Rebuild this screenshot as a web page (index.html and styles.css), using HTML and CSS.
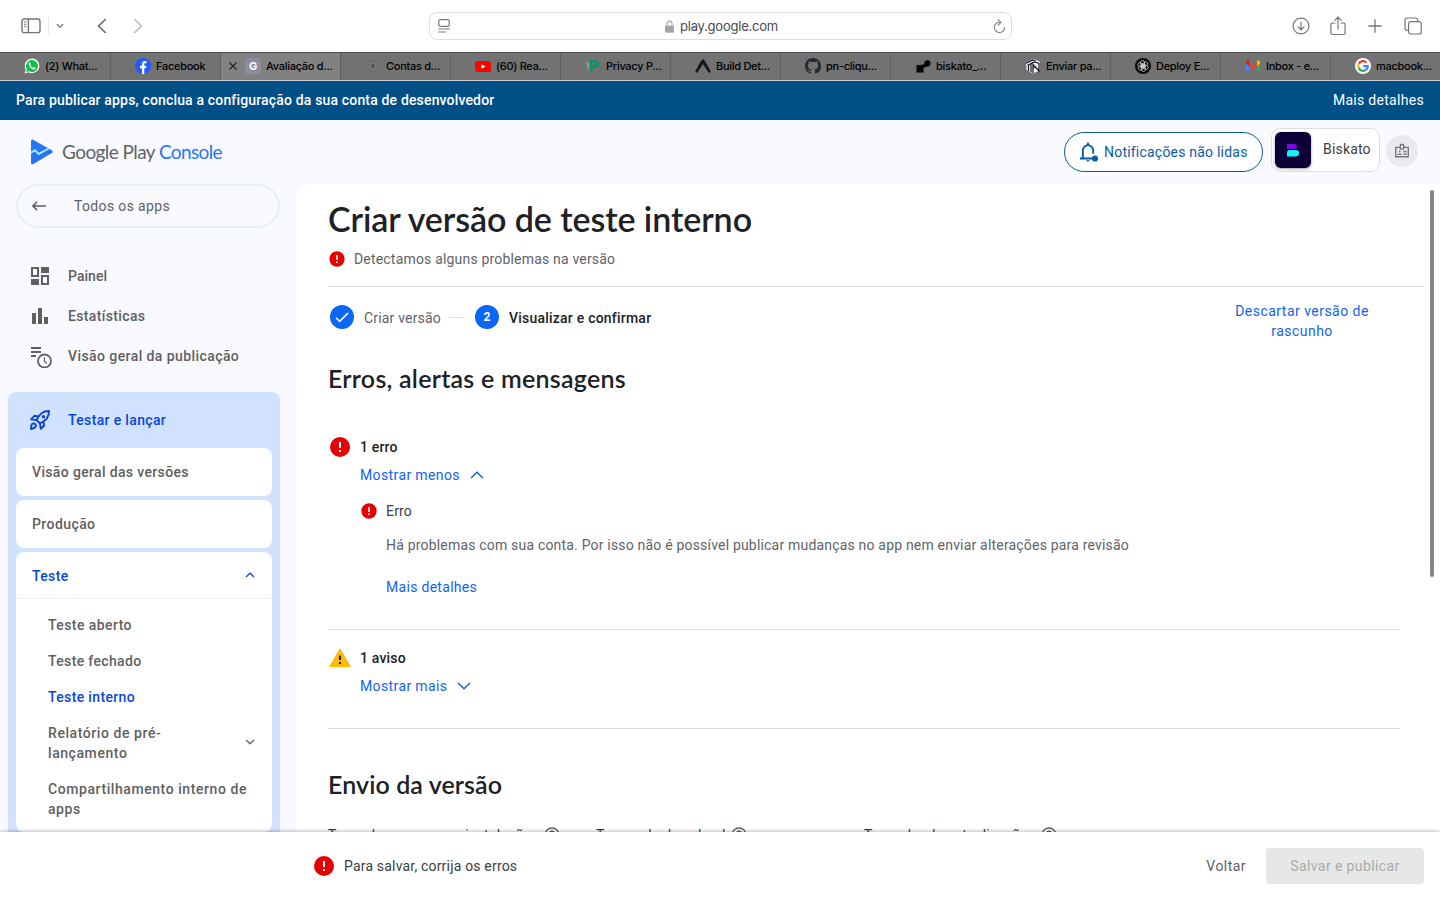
FILE: index.html
```
<!DOCTYPE html>
<html lang="pt-BR">
<head>
<meta charset="utf-8">
<title>Google Play Console</title>
<link rel="stylesheet" href="styles.css">
</head>
<body>
<div class="toolbar">
  <div class="tools-left">
    <svg class="i-side" width="20" height="16" viewBox="0 0 20 16" fill="none" stroke="#737373" stroke-width="1.4"><rect x="1" y="1" width="18" height="13.6" rx="2.2"/><path d="M7.4 1v13.6"/><path d="M3 4h2.4M3 6.3h2.4M3 8.6h2.4" stroke-width="1"/></svg>
    <span class="tool-sep"></span>
    <svg class="i-drop" width="8" height="6" viewBox="0 0 8 6" fill="none" stroke="#808080" stroke-width="1.5"><path d="M.8 1.2 4 4.3 7.2 1.2"/></svg>
    <svg class="i-back" width="10" height="16" viewBox="0 0 10 16" fill="none" stroke="#666" stroke-width="1.6" stroke-linecap="round" stroke-linejoin="round"><path d="M8.3 1.5 1.5 8l6.8 6.5"/></svg>
    <svg class="i-fwd" width="10" height="16" viewBox="0 0 10 16" fill="none" stroke="#bcbcbc" stroke-width="1.6" stroke-linecap="round" stroke-linejoin="round"><path d="M1.7 1.5 8.5 8l-6.8 6.5"/></svg>
  </div>
  <div class="address">
    <svg width="12" height="14" viewBox="0 0 12 14" fill="none" stroke="#7b7b7b" stroke-width="1.2"><rect x=".8" y=".7" width="10.4" height="6.6" rx="1.3"/><path d="M.2 10h11.6M.2 13h8"/></svg>
    <div class="host">
      <svg width="9" height="13" viewBox="0 0 9 13"><rect x="0" y="5.4" width="9" height="7.4" rx="1.2" fill="#a6a6a6"/><path d="M2 6V3.6a2.5 2.5 0 0 1 5 0V6" fill="none" stroke="#a6a6a6" stroke-width="1.1"/></svg>
      <span class="url">play.google.com</span>
    </div>
    <svg width="13" height="15" viewBox="0 0 13 15" fill="none" stroke="#7b7b7b" stroke-width="1.1" stroke-linecap="round"><path d="M6.7 3.3A5.1 5.1 0 1 0 11.5 8.4"/><path d="M5 .8 7.9 3.4 5.2 6.2"/></svg>
  </div>
  <div class="tools-right">
    <svg width="18" height="18" viewBox="0 0 18 18" fill="none" stroke="#757575" stroke-width="1.2" stroke-linecap="round"><circle cx="9" cy="9" r="7.9"/><path d="M9 5v7.6M6 9.8l3 3 3-3"/></svg>
    <svg width="16" height="20" viewBox="0 0 16 20" fill="none" stroke="#757575" stroke-width="1.2" stroke-linecap="round"><path d="M5 7H2.600A1.700 1.700 0 0 0 .9 8.700v8.100a1.700 1.700 0 0 0 1.700 1.700h10.800a1.700 1.700 0 0 0 1.700-1.700V8.700A1.700 1.700 0 0 0 13.400 7H11M8 13V1.300M4.800 4.300 8 1.100l3.200 3.200"/></svg>
    <svg width="14" height="14" viewBox="0 0 14 14" stroke="#757575" stroke-width="1.300" stroke-linecap="round"><path d="M7 .8v12.400M.8 7h12.400"/></svg>
    <svg width="18" height="18" viewBox="0 0 18 18" fill="none" stroke="#757575" stroke-width="1.2"><rect x="4.600" y="4.600" width="12.600" height="12.400" rx="2"/><path d="M4.500 13.400H3A2 2 0 0 1 1 11.400V3a2 2 0 0 1 2-2h8.600a2 2 0 0 1 2 2v1.400"/></svg>
  </div>
</div>

<div class="tabs">
  <div class="tab"><svg width="16" height="16" viewBox="0 0 16 16"><path d="M.6 15.400 1.700 11.500A7.300 7.300 0 1 1 4.600 14.300z" fill="#fff"/><path d="M2 14 2.900 11.200A6 6 0 1 1 5 13.200z" fill="#12c143"/><path d="M5.700 4.300c-.9.200-1.300 1-1.100 2 .5 2.400 2.600 4.600 5 5.100 1 .2 2-.4 2.100-1.500L9.900 9l-.9.900C7.700 9.400 6.800 8.500 6.300 7.200l.7-.8z" fill="#fff"/></svg><span>(2) What...</span></div>
  <div class="tab"><svg width="16" height="16" viewBox="0 0 16 16"><circle cx="8" cy="8" r="8" fill="#1f5cff"/><path d="M7 16V10.200H5V7.800h2V6.300C7 4.100 8.200 3 10 3l1.500.1v2.100h-1c-.9 0-1.200.5-1.200 1.200v1.400h2.100L11 10.200H9.300V16z" fill="#fff"/></svg><span>Facebook</span></div>
  <div class="tab active"><svg class="close" width="8" height="8" viewBox="0 0 8 8" stroke="#222" stroke-width="1.100"><path d="M.5.5l7 7M7.500.5l-7 7"/></svg><b class="fav-g">G</b><span>Avaliação d...</span></div>
  <div class="tab"><svg width="16" height="16" viewBox="0 0 16 16"><circle cx="8" cy="8" r="5" fill="#777" stroke="#676767" stroke-width="1" stroke-dasharray="2.600 1.300"/><circle cx="8" cy="8" r="2" fill="#555"/></svg><span>Contas d...</span></div>
  <div class="tab"><svg width="16" height="16" viewBox="0 0 16 16"><rect y="3" width="16" height="11" rx="2.800" fill="#f00"/><path d="M6.500 6.200v4.600l4-2.300z" fill="#fff"/></svg><span>(60) Rea...</span></div>
  <div class="tab"><svg width="16" height="16" viewBox="0 0 16 16"><path d="M1 3l4 2v9L2 9z" fill="#8b9698"/><path d="M4.500 2H10a4 4 0 0 1 0 8.300H7.300V14H4.500zM7.300 4.600v3.200H9.500a1.600 1.600 0 0 0 0-3.200z" fill="#0d9269" fill-rule="evenodd"/></svg><span>Privacy P...</span></div>
  <div class="tab"><svg width="16" height="16" viewBox="0 0 16 16"><path d="M7 1.800Q8 .9 9 1.800C11.500 5.200 13.500 9.500 15.700 13.400c-.2 1.200-1.500 1.700-2.300.8C11.500 11.600 9.800 8.700 8 6 6.200 8.700 4.500 11.600 2.600 14.200 1.800 15.100.5 14.600.3 13.400 2.500 9.500 4.500 5.200 7 1.800z" fill="#111820"/></svg><span>Build Det...</span></div>
  <div class="tab"><svg width="16" height="16" viewBox="0 0 16 16"><path fill="#24292f" d="M8 0C3.580 0 0 3.580 0 8c0 3.540 2.290 6.530 5.470 7.590.4.070.55-.17.55-.38v-1.490c-2.010.37-2.530-.49-2.690-.94-.09-.23-.48-.94-.82-1.130-.28-.15-.68-.52-.01-.53.63-.01 1.080.58 1.230.82.72 1.210 1.870.87 2.330.66.07-.52.28-.87.51-1.070-1.780-.2-3.640-.89-3.640-3.950 0-.87.31-1.590.82-2.150-.08-.2-.36-1.020.08-2.120 0 0 .67-.21 2.200.82a7.600 7.600 0 0 1 4 0c1.530-1.040 2.200-.82 2.200-.82.44 1.100.16 1.920.08 2.120.51.56.82 1.270.82 2.150 0 3.070-1.870 3.750-3.650 3.950.29.25.54.73.54 1.480v2.200c0 .21.150.46.550.38A8 8 0 0 0 16 8c0-4.420-3.580-8-8-8z"/></svg><span>pn-cliqu...</span></div>
  <div class="tab"><svg width="16" height="16" viewBox="0 0 16 16"><path d="M1.500 7H5.500L9.300 6.300A3.200 3.200 0 1 1 12 8.500L8.500 10v4.500h-7z" fill="#050505"/></svg><span>biskato_...</span></div>
  <div class="tab"><svg width="16" height="16" viewBox="0 0 16 16"><path d="M1 4.500 8.500.8l6.500 3v8.500L8 15.400 1.500 12z" fill="#f3f3f8"/><path d="M1 5.200 8 2l2.500.8M2.500 7.200 9.500 4 14.500 5.500M3.500 6.500V13M6 5.800V14M8 15V6.500l6 6.500V5.500M8.500 10l3-1" stroke="#161527" fill="none" stroke-width="1.200"/></svg><span>Enviar pa...</span></div>
  <div class="tab"><svg width="16" height="16" viewBox="0 0 16 16"><circle cx="8" cy="8" r="8" fill="#050505"/><g fill="none" stroke="#e8e8e8" stroke-width=".7"><rect x="5.700" y="2.500" width="3.800" height="6.600" rx="1.900"/><rect x="5.700" y="2.500" width="3.800" height="6.600" rx="1.900" transform="rotate(60 8 8)"/><rect x="5.700" y="2.500" width="3.800" height="6.600" rx="1.900" transform="rotate(120 8 8)"/><rect x="5.700" y="2.500" width="3.800" height="6.600" rx="1.900" transform="rotate(180 8 8)"/><rect x="5.700" y="2.500" width="3.800" height="6.600" rx="1.900" transform="rotate(240 8 8)"/><rect x="5.700" y="2.500" width="3.800" height="6.600" rx="1.900" transform="rotate(300 8 8)"/></g></svg><span>Deploy E...</span></div>
  <div class="tab"><svg width="16" height="16" viewBox="0 0 16 16"><path d="M1 4v9.200h3.200V6z" fill="#4285f4"/><path d="M15 4v9.200h-3.200V6z" fill="#34a853"/><path d="M11.800 4.800V8L15 5.700V4c0-1.500-1.700-2-2.900-1.200z" fill="#fbbc04"/><path d="M4 4.400 8 7.400l4-3V8l-4 3.200L4 8z" fill="#ea4335"/><path d="M1 4c0-1.500 1.600-2.100 2.900-1.200l.3.200v5L1 5.700z" fill="#d21f1f"/></svg><span>Inbox - e...</span></div>
  <div class="tab"><svg width="16" height="16" viewBox="0 0 16 16"><circle cx="8" cy="8" r="8" fill="#fff"/><g fill="none" stroke-width="2.200"><path d="M11.600 4.700A4.800 4.800 0 0 0 3.700 5.900" stroke="#ea4335"/><path d="M3.800 5.700a4.900 4.900 0 0 0 0 4.600" stroke="#fbbc05"/><path d="M3.700 10.100a4.800 4.800 0 0 0 7.400 1.600" stroke="#34a853"/><path d="M8.200 8.200H12.800A4.800 4.800 0 0 1 11 11.800" stroke="#4285f4"/></g></svg><span>macbook...</span></div>
</div>

<div class="banner"><span class="banner-text">Para publicar apps, conclua a configuração da sua conta de desenvolvedor</span><a class="banner-link">Mais detalhes</a></div>

<header class="header">
  <div class="brand">
    <svg width="24" height="26" viewBox="0 0 24 26"><path d="M1 2.200C1 .9 2.300.2 3.500.9l18.300 10.300c1.200.7 1.200 2.100 0 2.800L3.500 25C2.300 25.700 1 25 1 23.700z" fill="#2775f6"/><path d="M1 12.600 5.300 9.900l3.300 3.800L17.800 8.900l2 1.200L8.300 16.200 5 12.600 1 14.800z" fill="#a5e9fd"/></svg>
    <span class="logo-a">Google Play</span><span class="logo-b">Console</span>
  </div>
  <div class="account">
    <div class="notif"><svg width="20" height="22" viewBox="0 0 20 22"><path d="M1 17.500h12M3.800 17.500V9.500a5.200 5.200 0 0 1 10.400 0v3.300M9 4.500V1.500" fill="none" stroke="#0b5c9e" stroke-width="1.900"/><path d="M6.800 19.200h4.200L9 21z" fill="#0b5c9e"/><circle cx="16" cy="17.500" r="3.100" fill="#0b5c9e"/></svg><span>Notificações não lidas</span></div>
    <div class="app"><span class="app-icon"><svg width="12" height="13" viewBox="0 0 12 13"><path d="M0 0h6.500a3 3 0 0 1 2.700 5H0z" fill="#7a0bdc"/><path d="M0 8.500C0 7 1 6 2.500 6H9a3.200 3.200 0 0 1 0 6.400H0z" fill="#0ff5f5"/></svg></span><span class="app-name">Biskato</span></div>
    <div class="badge"><svg width="16" height="16" viewBox="0 0 16 16" fill="none" stroke="#74777b" stroke-width="1.400"><path d="M6.200 4.400H1.700v9.400h12.600V4.400H9.800"/><rect x="6.300" y="1.500" width="3.400" height="4.600" rx=".8"/><path d="M9.500 8.500h3M9.500 11h3M3.600 11.400h4.200M5.700 7.500v2"/></svg></div>
  </div>
</header>

<div class="body">
  <nav class="side">
    <a class="back"><svg width="14" height="10" viewBox="0 0 14 10" fill="none" stroke="#5f5f5f" stroke-width="1.500"><path d="M14 5H1.200M5 .9.900 5 5 9.100"/></svg><span>Todos os apps</span></a>
    <div class="nav">
      <a><svg width="24" height="24" viewBox="0 0 24 24"><path d="M3 3h8v10H3zM5 5v6h4V5zM13 3h8v6h-8zM3 15h8v6H3zM13 11h8v10h-8zM15 13v6h4v-6z" fill="#5f5f5f" fill-rule="evenodd"/></svg><span class="snug">Painel</span></a>
      <a><svg width="24" height="24" viewBox="0 0 24 24"><path d="M4 9h4v11H4zM10 4h4v16h-4zM16 13h4v7h-4z" fill="#5f5f5f"/></svg><span>Estatísticas</span></a>
      <a><svg width="24" height="24" viewBox="0 0 24 24" fill="none" stroke="#5f6368" stroke-width="1.800"><path d="M3 4h10M3 8h10M3 12h5"/><circle cx="16.500" cy="17" r="6.500"/><path d="M16.400 13.300v4l2.300 2.200" stroke-width="1.200"/></svg><span class="loose">Visão geral da publicação</span></a>
    </div>
    <div class="group">
      <a class="group-head"><svg width="24" height="24" viewBox="0 0 24 24" fill="none" stroke="#0b45d8" stroke-width="1.900" stroke-linejoin="round"><path d="M21 3c-5.500-.3-9.500 2.700-12.500 9l3.500 3.500C18.300 12.500 21.300 8.500 21 3z"/><path d="M10 8.500 6.500 7.800 3.200 11.200l5.300.8M15.500 14l.7 3.500-3.400 3.300-.8-5.300M3 21c0-3 .3-4.200 1.200-5 1-.9 2.300-.8 3 .1.800.8.900 2 .1 2.900-.9.900-1.800 1.500-4.300 2z"/><circle cx="15.500" cy="8.700" r="1.700" fill="#0b45d8" stroke="none"/></svg><span>Testar e lançar</span></a>
      <a class="card"><span>Visão geral das versões</span></a>
      <a class="card"><span class="loose">Produção</span></a>
      <div class="card open">
        <a class="open-head"><span>Teste</span><svg width="10" height="6" viewBox="0 0 10 6" fill="none" stroke="#0b45d8" stroke-width="1.200"><path d="M1 5 5 1.200 9 5"/></svg></a>
        <div class="sub">
          <a><span class="loose">Teste aberto</span></a>
          <a><span>Teste fechado</span></a>
          <a class="on"><span>Teste interno</span></a>
          <a class="exp"><span class="wide">Relatório de pré-<br>lançamento</span><svg width="10" height="6" viewBox="0 0 10 6" fill="none" stroke="#5f5f5f" stroke-width="1.200"><path d="M1 1 5 4.800 9 1"/></svg></a>
          <a><span class="wide">Compartilhamento interno de<br>apps</span></a>
        </div>
      </div>
    </div>
  </nav>

  <main class="main">
    <h1>Criar versão de teste interno</h1>
    <div class="status"><svg width="18" height="18" viewBox="0 0 20 20"><circle cx="10" cy="10" r="8.500" fill="#e60000"/><path d="M9.100 5.500h1.800v5.500H9.100zM9.100 12.700h1.800v1.800H9.100z" fill="#fff"/></svg><span>Detectamos alguns problemas na versão</span></div>
    <div class="rule full"></div>
    <div class="steps">
      <div class="stepper">
        <span class="dot"><svg width="14" height="11" viewBox="0 0 14 11" fill="none" stroke="#fff" stroke-width="1.600"><path d="M1 5.800 4.600 9.300 13 1.200"/></svg></span>
        <span class="step-a">Criar versão</span><i></i>
        <span class="dot">2</span><span class="step-b">Visualizar e confirmar</span>
      </div>
      <a class="discard">Descartar versão de<br>rascunho</a>
    </div>
    <h2 class="h-err">Erros, alertas e mensagens</h2>

    <section class="msg err">
      <svg width="24" height="24" viewBox="0 0 24 24"><circle cx="12" cy="12" r="10" fill="#e60000"/><path d="M11 7h2v6h-2zM11 15h2v2h-2z" fill="#fff"/></svg>
      <div class="msg-body">
        <div class="msg-title">1 erro</div>
        <a class="toggle"><span>Mostrar menos</span><svg width="14" height="8" viewBox="0 0 14 8" fill="none" stroke="#1163f2" stroke-width="1.500"><path d="M1 7 7 1.200 13 7"/></svg></a>
        <div class="detail">
          <svg width="18" height="18" viewBox="0 0 20 20"><circle cx="10" cy="10" r="8.500" fill="#e60000"/><path d="M9.100 5.500h1.800v5.500H9.100zM9.100 12.700h1.800v1.800H9.100z" fill="#fff"/></svg>
          <div>
            <div class="d-title">Erro</div>
            <p>Há problemas com sua conta. Por isso não é possível publicar mudanças no app nem enviar alterações para revisão</p>
            <a class="link">Mais detalhes</a>
          </div>
        </div>
      </div>
    </section>
    <div class="rule"></div>
    <section class="msg warn">
      <svg width="24" height="24" viewBox="0 0 24 24"><path d="M1 21h22L12 2z" fill="#fdbb05"/><path d="M11 9.500h2v4.500h-2zM11 16h2v2h-2z" fill="#202124"/></svg>
      <div class="msg-body">
        <div class="msg-title">1 aviso</div>
        <a class="toggle"><span>Mostrar mais</span><svg width="14" height="8" viewBox="0 0 14 8" fill="none" stroke="#1163f2" stroke-width="1.500"><path d="M1 1 7 6.800 13 1"/></svg></a>
      </div>
    </section>
    <div class="rule"></div>
    <h2 class="h-send">Envio da versão</h2>
    <div class="cols">
      <div><span>Tamanho para novas instalações</span><svg width="16" height="16" viewBox="0 0 16 16" fill="none" stroke="#5f6368" stroke-width="1.300"><circle cx="8" cy="8" r="7"/><path d="M5.600 6.400a2.400 2.400 0 1 1 3.800 2C8.400 9 8 9.300 8 10.200M8 11.400v1.400"/></svg></div>
      <div><span>Tempo de download</span><svg width="16" height="16" viewBox="0 0 16 16" fill="none" stroke="#5f6368" stroke-width="1.300"><circle cx="8" cy="8" r="7"/><path d="M5.600 6.400a2.400 2.400 0 1 1 3.800 2C8.400 9 8 9.300 8 10.200M8 11.400v1.400"/></svg></div>
      <div><span>Tamanho das atualizações</span><svg width="16" height="16" viewBox="0 0 16 16" fill="none" stroke="#5f6368" stroke-width="1.300"><circle cx="8" cy="8" r="7"/><path d="M5.600 6.400a2.400 2.400 0 1 1 3.800 2C8.400 9 8 9.300 8 10.200M8 11.400v1.400"/></svg></div>
    </div>
  </main>
  <div class="thumb"></div>
</div>

<footer class="footer">
  <svg width="24" height="24" viewBox="0 0 24 24"><circle cx="12" cy="12" r="10" fill="#e60000"/><path d="M11 7h2v6h-2zM11 15h2v2h-2z" fill="#fff"/></svg>
  <span class="foot-msg">Para salvar, corrija os erros</span>
  <a class="voltar">Voltar</a>
  <button class="save">Salvar e publicar</button>
</footer>
</body>
</html>
```
FILE: styles.css
```
* { box-sizing: border-box; }
body { margin: 0; width: 1440px; height: 900px; overflow: hidden; display: flex; flex-direction: column; background: #f8faff; font: 400 14px/20px Roboto, "Open Sans", sans-serif; letter-spacing: .185px; color: #5f5f5f; }
h1, h2, p { margin: 0; }
svg { display: block; flex: none; }
span { white-space: nowrap; }

.toolbar { height: 52px; flex: none; display: grid; grid-template-columns: 429px 583px 1fr; align-items: center; background: #fff; }
.tools-left { display: flex; align-items: center; padding-left: 21px; }
.tool-sep { width: 1px; height: 18px; background: #e8e8e8; margin-left: 7px; }
.i-drop { margin-left: 7px; }
.i-back { margin: -1px 0 0 33px; }
.i-fwd { margin: -1px 0 0 26px; }
.address { height: 28px; border: 1px solid #dedede; border-radius: 8px; display: flex; align-items: center; justify-content: space-between; padding: 0 5px 0 8px; }
.host { display: flex; align-items: center; gap: 6px; }
.url { font: 400 13px/16px Inter, sans-serif; letter-spacing: -.22px; color: #4a4a4a; }
.tools-right { display: flex; align-items: center; padding: 0 0 1px 280px; }
.tools-right svg + svg { margin-left: 20px; }
.tools-right svg:nth-child(3) { margin-left: 22px; }
.tools-right svg:nth-child(4) { margin-left: 22px; }

.tabs { height: 29px; flex: none; display: flex; background: #727272; border-top: 1px solid #4f4f4f; border-bottom: 1px solid #c9cfd4; }
.tab { width: 110px; padding: 0 0 1px 24px; display: flex; align-items: center; gap: 5px; font: 500 11px/14px Inter, sans-serif; letter-spacing: -.28px; color: #000; }
.tab + .tab { border-left: 1px solid #5f5f5f; }
.tab.active { width: 120px; background: #818181; padding-left: 8px; }
.tab .close { margin-right: 3px; }
.fav-g { width: 16px; height: 16px; border-radius: 3px; background: #8d8d9e; color: #fff; text-align: center; font: 700 11px/17px Inter, sans-serif; }

.banner { height: 39px; flex: none; background: #004f87; color: #fff; display: flex; align-items: center; justify-content: space-between; padding: 0 16px 1px; font-weight: 500; letter-spacing: .163px; }
.banner-link { font-weight: 450; letter-spacing: .3px; }

.header { height: 64px; flex: none; display: flex; align-items: center; justify-content: space-between; padding: 0 22px 0 30px; }
.brand { display: flex; align-items: center; font: 400 19px/24px Lato, sans-serif; }
.logo-a { margin-left: 8px; color: #5f6368; letter-spacing: -.58px; }
.logo-b { margin-left: 4px; color: #2775f6; letter-spacing: -.63px; }
.account { display: flex; align-items: center; }
.notif { width: 199px; height: 40px; border: 1px solid #0b5c9e; border-radius: 20px; background: #fff; color: #0b5c9e; letter-spacing: .21px; display: flex; align-items: center; gap: 5px; padding-left: 14px; }
.app { width: 109px; height: 44px; margin: -4px 0 0 8px; border: 1px solid #dcdee3; border-radius: 9px; background: #fff; display: flex; align-items: center; padding-left: 3px; color: #3c4043; }
.app-icon { width: 36px; height: 36px; border-radius: 6px; background: #0d0038; display: flex; align-items: center; justify-content: center; box-shadow: 0 1px 3px rgba(0,0,0,.4); }
.app-name { margin: -2px 0 0 12px; }
.badge { width: 32px; height: 32px; margin: -3px 0 0 6px; border-radius: 50%; background: #e9eaee; display: flex; align-items: center; justify-content: center; }

.body { height: 648px; flex: none; display: flex; position: relative; overflow: hidden; }
.side { width: 296px; flex: none; font-weight: 500; letter-spacing: .35px; }
.snug { letter-spacing: .05px; }
.loose { letter-spacing: .42px; }
.wide { letter-spacing: .57px; }
.back { margin: 0 16px; height: 44px; border: 2px solid #e6eef8; border-radius: 22px; display: flex; align-items: center; padding-left: 14px; gap: 28px; font-weight: 450; }
.nav { margin: 28px 0 16px 28px; }
.nav a { height: 40px; display: flex; align-items: center; gap: 16px; }
.group { margin: 0 16px 0 8px; padding: 0 8px 8px; background: #d1e2ff; border-radius: 8px 8px 0 0; }
.group-head { height: 56px; display: flex; align-items: center; gap: 16px; padding-left: 12px; color: #0b45d8; }
.card { height: 48px; margin-bottom: 4px; background: #fff; border-radius: 8px; display: flex; align-items: center; padding-left: 16px; }
.card.open { height: auto; display: block; padding: 0 0 5px; }
.open-head { height: 47px; display: flex; align-items: center; justify-content: space-between; padding: 2px 17px 0 16px; border-bottom: 1px solid #f3f3f5; color: #0b45d8; }
.open-head svg { margin-top: -2px; }
.sub { padding-top: 8px; }
.sub a { display: block; padding: 8px 17px 8px 32px; }
.sub .exp { display: flex; align-items: center; justify-content: space-between; }
.exp svg { margin-top: -2px; }
.sub .on { color: #0b45d8; }

.main { flex: 1; background: #fff; border-radius: 16px 0 0 0; padding: 15px 40px 0 32px; }
.thumb { position: absolute; right: 6px; top: 6px; width: 4px; height: 387px; border-radius: 2px; background: #80868b; }
h1 { font: 600 34px/40px Lato, sans-serif; letter-spacing: -.07px; color: #202124; }
h2 { font: 600 25px/32px Lato, sans-serif; letter-spacing: .25px; color: #202124; }
.status { margin-top: 10px; display: flex; align-items: center; gap: 8px; color: #5f6368; }
.rule { height: 1px; background: #dadce0; }
.rule.full { margin: 17px -24px 0 0; }
.steps { display: flex; justify-content: space-between; align-items: flex-start; padding-top: 14px; }
.stepper { display: flex; align-items: center; margin: 4px 0 0 2px; height: 24px; color: #5f6368; }
.stepper i { width: 16px; height: 1px; background: #dadce0; margin: 0 10px 0 8px; }
.dot { width: 24px; height: 24px; border-radius: 50%; background: #0b66f5; color: #fff; display: flex; align-items: center; justify-content: center; font: 700 12px/24px Roboto, sans-serif; }
.step-a, .step-b { margin: 2px 0 0 10px; }
.step-b { font-weight: 500; letter-spacing: .22px; color: #202124; }
.discard { width: 196px; text-align: center; font-weight: 450; letter-spacing: .47px; color: #1163f2; }
.h-err { margin-top: 21px; }
.msg { display: flex; gap: 8px; }
.msg.err { margin: 43px 0 32px; }
.msg.warn { margin: 18px 0 32px; }
.msg > svg { margin-top: -2px; }
.msg-title { font-weight: 500; color: #202124; }
.toggle { display: flex; align-items: center; gap: 10px; margin-top: 8px; color: #1163f2; font-weight: 450; letter-spacing: .38px; }
.detail { display: flex; gap: 8px; margin-top: 16px; }
.detail > svg { margin-top: 1px; }
.d-title { color: #3c4043; }
.detail p { margin: 14px 0 22px; letter-spacing: .19px; color: #5f6368; }
.link { display: block; color: #1163f2; font-weight: 450; letter-spacing: .3px; }
.h-send { margin-top: 39px; letter-spacing: .09px; }
.cols { margin-top: 25px; display: grid; grid-template-columns: 268px 268px 1fr; color: #3c4043; }
.cols div { display: flex; align-items: center; gap: 5px; }

.footer { height: 68px; flex: none; position: relative; background: #fff; box-shadow: 0 0 4px rgba(0,0,0,.4); display: flex; align-items: center; padding: 0 16px 0 312px; }
.foot-msg { margin-left: 8px; color: #3c4043; }
.voltar { margin-left: auto; font-weight: 450; letter-spacing: .45px; }
.save { width: 158px; height: 36px; margin-left: 20px; padding: 0; border: 0; border-radius: 4px; background: #e6e8e7; color: #a9abab; font: 450 14px/20px Roboto, sans-serif; letter-spacing: .4px; }
```
